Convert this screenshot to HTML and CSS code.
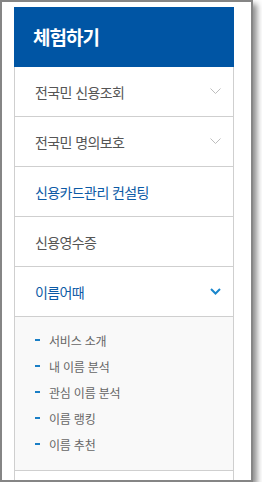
FILE: index.html
```html
<!DOCTYPE html>
<html lang="ko">
<head>
<meta charset="UTF-8">
<meta name="viewport" content="width=device-width, initial-scale=1.0">
<title>체험하기</title>
<link rel="stylesheet" href="styles.css">
</head>
<body>

<div class="window">
    <div class="side-menu">
        <h2 class="menu-title">체험하기</h2>

        <ul class="menu-list">
            <li class="menu-item">
                <a href="#">전국민 신용조회</a>
                <svg class="chevron" width="11" height="7" viewBox="0 0 11 7"><path d="M0.5 0.5 L5.5 5.5 L10.5 0.5" fill="none" stroke="#bdbdbd" stroke-width="1"/></svg>
            </li>
            <li class="menu-item">
                <a href="#">전국민 명의보호</a>
                <svg class="chevron" width="11" height="7" viewBox="0 0 11 7"><path d="M0.5 0.5 L5.5 5.5 L10.5 0.5" fill="none" stroke="#bdbdbd" stroke-width="1"/></svg>
            </li>
            <li class="menu-item active">
                <a href="#">신용카드관리 컨설팅</a>
            </li>
            <li class="menu-item">
                <a href="#">신용영수증</a>
            </li>
            <li class="menu-item active">
                <a href="#">이름어때</a>
                <svg class="chevron" width="11" height="7" viewBox="0 0 11 7"><path d="M1 1 L5.5 5.5 L10 1" fill="none" stroke="#1a86cc" stroke-width="2"/></svg>
            </li>
            <li class="sub-menu">
                <ul>
                    <li><a href="#">서비스 소개</a></li>
                    <li><a href="#">내 이름 분석</a></li>
                    <li><a href="#">관심 이름 분석</a></li>
                    <li><a href="#">이름 랭킹</a></li>
                    <li><a href="#">이름 추천</a></li>
                </ul>
            </li>
            <li class="menu-item">
                <a href="#">&nbsp;</a>
            </li>
        </ul>
    </div>
</div>

</body>
</html>
```

FILE: styles.css
```css
body {
    font-family: "Noto Sans CJK KR", "Noto Sans", sans-serif;
    margin: 0;
    padding: 0;
    background-color: #fff;
}
.window {
    width: 237px;
    height: 473px;
    padding: 5px 0 0 12px;
    border: 2px solid #858585;
    background-color: #fff;
    box-shadow: 4px 4px 6px rgba(0, 0, 0, 0.45);
    overflow: hidden;
}
.side-menu {
    width: 220px;
}
.menu-title {
    margin: 0;
    height: 60px;
    padding-left: 19px;
    background-color: #0055a4;
    color: #fff;
    font-size: 19px;
    font-weight: bold;
    letter-spacing: -1px;
    line-height: 60px;
}
.menu-list {
    list-style: none;
    margin: 0;
    padding: 0;
    border-left: 1px solid #cfcfcf;
    border-right: 1px solid #cfcfcf;
}
.menu-item {
    display: flex;
    align-items: center;
    justify-content: space-between;
    height: 49px;
    padding: 0 12px 0 20px;
    border-bottom: 1px solid #cfcfcf;
}
.menu-item a {
    color: #555;
    font-size: 14px;
    letter-spacing: -0.6px;
    text-decoration: none;
}
.menu-item.active a {
    color: #0b5aa6;
}
.chevron {
    display: block;
}
.sub-menu {
    background-color: #f9f9f9;
    border-bottom: 1px solid #cfcfcf;
    padding: 10px 0 13px 20px;
}
.sub-menu ul {
    list-style: none;
    margin: 0;
    padding: 0;
}
.sub-menu li {
    display: flex;
    align-items: center;
    height: 26px;
}
.sub-menu li::before {
    content: "";
    width: 5px;
    height: 2px;
    margin-right: 9px;
    background-color: #1a7fc6;
}
.sub-menu a {
    color: #666;
    font-size: 12px;
    letter-spacing: -0.2px;
    text-decoration: none;
}
```
